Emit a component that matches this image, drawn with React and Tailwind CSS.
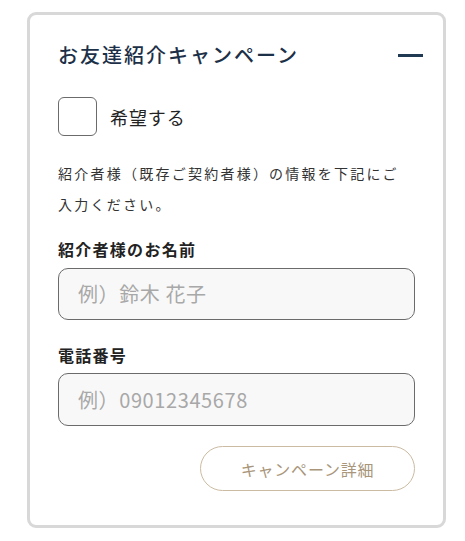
export default function App() {
  const font = { fontFamily: '"Noto Sans CJK JP", "Noto Sans", sans-serif' };
  return (
    <div className="w-[465px] h-[541px] bg-white pt-[12px] pl-[27px]" style={font}>
      <div className="w-[419px] h-[516px] border-[3px] border-[#d8d8d8] rounded-[9px] bg-white pl-[28px] pr-[27px] pt-[26px] flex flex-col">
        <div className="flex items-center justify-between h-[28px]">
          <h2 className="text-[20px] leading-[28px] font-medium tracking-[0.1em] text-[#1c3048]">お友達紹介キャンペーン</h2>
          <div className="w-[25px] h-[3px] bg-[#1f3a52] mr-[-7px]" />
        </div>
        <label className="flex items-center mt-[28px] h-[39px]">
          <span className="w-[39px] h-[39px] border border-[#6b6b6b] rounded-[6px] bg-white" />
          <span className="ml-[13px] text-[18px] leading-[24px] text-[#222] tracking-[0.05em]">希望する</span>
        </label>
        <p className="mt-[22px] w-[350px] text-[14px] leading-[31px] text-[#333] tracking-[0.16em]">
          紹介者様（既存ご契約者様）の情報を下記にご入力ください。
        </p>
        <div className="mt-[17px] text-[16px] leading-[24px] font-bold text-[#222] tracking-[0.08em]">紹介者様のお名前</div>
        <div className="mt-[7px] h-[52px] w-[357px] border border-[#6b6b6b] rounded-[10px] bg-[#f8f8f8] flex items-center pl-[19px] text-[20px] tracking-[0.03em] text-[#a8a8a8]">例）鈴木 花子</div>
        <div className="mt-[23px] text-[16px] leading-[24px] font-bold text-[#222] tracking-[0.08em]">電話番号</div>
        <div className="mt-[6px] h-[53px] w-[357px] border border-[#6b6b6b] rounded-[10px] bg-[#f8f8f8] flex items-center pl-[19px] text-[20px] tracking-[0.03em] text-[#a8a8a8]">例）09012345678</div>
        <div className="mt-[20px] flex justify-end w-[357px]">
          <button className="w-[215px] h-[45px] rounded-full border border-[#cbbba3] text-[16px] text-[#a8957a] tracking-[0.05em] bg-white">キャンペーン詳細</button>
        </div>
      </div>
    </div>
  );
}
